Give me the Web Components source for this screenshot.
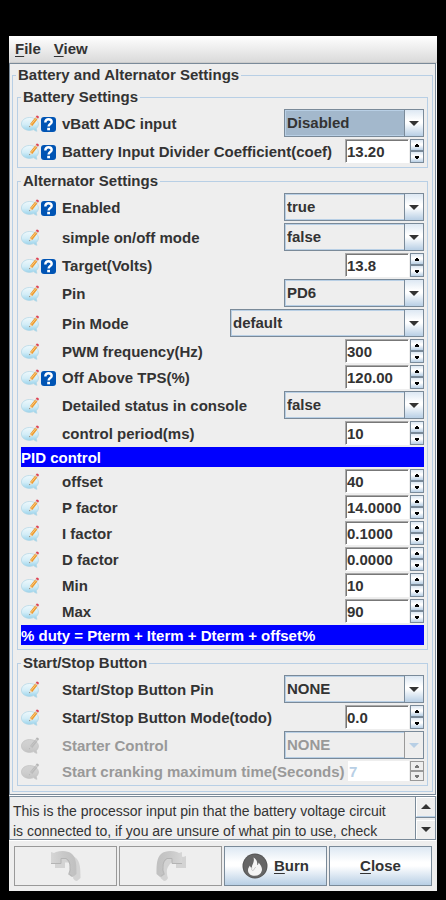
<!DOCTYPE html>
<html lang="en">
<head>
<meta charset="utf-8">
<meta name="viewport" content="width=device-width, initial-scale=1">
<title>Battery and Alternator Settings</title>
<style>
  body {
    margin: 0;
    padding: 36px 9px 9px;
    background: #000;
    color: #333;
    font: bold 15px/20px "Liberation Sans", Arial, sans-serif;
    --face: #eee;
    --edge: #7a8a99;
    --soft: #b8cfe5;
    --off: #999;
    --metal: linear-gradient(#dde8f3, #fff 40%, #fff 50%, #b8cfe5);
  }
</style>
</head>
<body>
<settings-window>
  <menu-bar slot="menu"></menu-bar>
  <settings-group heading="Battery and Alternator Settings" outer>
    <settings-group heading="Battery Settings">
      <setting-row label="vBatt ADC input" kind="choice" value="Disabled" help current></setting-row>
      <setting-row label="Battery Input Divider Coefficient(coef)" value="13.20" help></setting-row>
    </settings-group>
    <settings-group heading="Alternator Settings">
      <setting-row label="Enabled" kind="choice" value="true" options="false" help></setting-row>
      <setting-row label="simple on/off mode" kind="choice" value="false" options="true"></setting-row>
      <setting-row label="Target(Volts)" value="13.8" help></setting-row>
      <setting-row label="Pin" kind="choice" value="PD6"></setting-row>
      <setting-row label="Pin Mode" kind="choice" value="default" wide></setting-row>
      <setting-row label="PWM frequency(Hz)" value="300"></setting-row>
      <setting-row label="Off Above TPS(%)" value="120.00" help></setting-row>
      <setting-row label="Detailed status in console" kind="choice" value="false" options="true"></setting-row>
      <setting-row label="control period(ms)" value="10"></setting-row>
      <banner-row>PID control</banner-row>
      <setting-row label="offset" value="40"></setting-row>
      <setting-row label="P factor" value="14.0000"></setting-row>
      <setting-row label="I factor" value="0.1000"></setting-row>
      <setting-row label="D factor" value="0.0000"></setting-row>
      <setting-row label="Min" value="10"></setting-row>
      <setting-row label="Max" value="90"></setting-row>
      <banner-row>% duty = Pterm + Iterm + Dterm + offset%</banner-row>
    </settings-group>
    <settings-group heading="Start/Stop Button">
      <setting-row label="Start/Stop Button Pin" kind="choice" value="NONE"></setting-row>
      <setting-row label="Start/Stop Button Mode(todo)" value="0.0"></setting-row>
      <setting-row label="Starter Control" kind="choice" value="NONE" disabled></setting-row>
      <setting-row label="Start cranking maximum time(Seconds)" value="7" disabled></setting-row>
    </settings-group>
  </settings-group>
  <hint-pane slot="hint">This is the processor input pin that the battery voltage circuit is connected to, if you are unsure of what pin to use, check</hint-pane>
  <action-bar slot="actions"></action-bar>
</settings-window>

<script>
const define = (name, css, html, setup) => customElements.define(name, class extends HTMLElement {
  connectedCallback() {
    if (this.shadowRoot) return;
    const root = this.attachShadow({ mode: 'open' });
    root.innerHTML = `<style>*{box-sizing:border-box}:host{display:block;box-sizing:border-box}${css}</style>` +
      (typeof html === 'function' ? html(this) : html);
    if (setup) setup(root, this);
  }
});

define('settings-window', `
  :host { background: var(--face); }
  main { margin-right: 1px; border: 1px solid var(--edge); padding: 0 2px 2px; box-shadow: 1px 1px #fff; }
  .hint { margin-top: 1px; }
`, `<slot name="menu"></slot><main><slot></slot></main><div class="hint"><slot name="hint"></slot></div><slot name="actions"></slot>`);

define('menu-bar', `
  :host { background: linear-gradient(#fff, #dadada); border-bottom: 1px solid #ccc; }
  nav { display: flex; gap: 13px; padding: 3px 6px; }
  button { border: 0; padding: 0; background: none; font: inherit; color: inherit; }
  u { text-underline-offset: 2px; }
`, `<nav aria-label="Main menu"><button type="button"><u>F</u>ile</button><button type="button"><u>V</u>iew</button></nav>`);

define('settings-group', `
  :host(:not(:first-of-type)) { margin-top: 2px; }
  fieldset { margin: 0; min-width: 0; border: 1px solid var(--soft); padding: 0 3px 3px; }
  legend { margin: 0; padding: 1px 2px; height: 22px; line-height: 20px; }
  :host([outer]) fieldset { padding: 0 4px 5px; }
  :host([outer]) legend { margin-left: -1px; }
`, el => `<fieldset><legend>${el.getAttribute('heading')}</legend><slot></slot></fieldset>`);

define('banner-row', `
  :host { margin: 1px 0; background: #00f; color: #fff; height: 20px; line-height: 21px; }
`, `<slot></slot>`);

const bubble = off => {
  const c = off
    ? { a: '#d2d2d2', m: '#cecece', b: '#c2c2c2', p: '#bababa', q: '#c6c6c6', t: '#b4b4b4', w: '#ccc', s: '#c2c2c2' }
    : { a: '#eef8fc', m: '#d3edf7', b: '#93d0ea', p: '#ee9a2e', q: '#fbd08a', t: '#dd4455', w: '#d8c8b8', s: '#afd5e5' };
  return `<svg class="note" width="18" height="17" viewBox="0 0 18 17" aria-hidden="true">
    <defs><linearGradient id="g" x2="0" y2="1"><stop stop-color="${c.a}"/><stop offset=".5" stop-color="${c.m}"/><stop offset="1" stop-color="${c.b}"/></linearGradient></defs>
    <path d="M8.6 2.500C4 2.500.4 5.300.4 9s3.600 6.400 8.200 6.400c1.500 0 3-.3 4.200-.8.8.9 2 1.600 3.200 1.700-.5-.8-.7-1.800-.6-2.900 1.300-1.100 2-2.700 2-4.400 0-3.700-4-6.500-8.800-6.500Z" fill="url(#g)" stroke="${c.s}" stroke-width=".7"/>
    <path d="M8.200 12.200 9 8.900 11.300 11Z" fill="${off ? c.w : '#f3dfc2'}"/><path d="M8.200 12.200 8.500 10.900 9.400 11.700Z" fill="${off ? '#aaa' : '#555'}"/>
    <path d="M9 8.900 14 2.700 16.300 4.600 11.300 11Z" fill="${c.p}"/><path d="M9.900 9.700 15 3.500" stroke="${c.q}" stroke-width=".9"/>
    <path d="m14 2.700.8-1 2.300 1.900-.8 1Z" fill="${c.w}"/><path d="m14.800 1.700.8-1c.7-.6 2.700.8 2.200 1.900l-.7 1Z" fill="${c.t}"/></svg>`;
};
const help = `<svg width="15" height="15" viewBox="0 0 15 15" role="img" aria-label="Help"><rect width="15" height="15" rx="3" fill="#0054b4"/>
  <path d="M4.300 5.400C4.300 3 5.700 2.200 7.500 2.200s3.200 1 3.200 2.700c0 2.200-3.100 2.200-3.100 4.700" fill="none" stroke="#fff" stroke-width="2.400"/><rect x="6.200" y="10.800" width="2.800" height="2.500" fill="#fff"/></svg>`;

define('setting-row', `
  .row { display: grid; grid-template-columns: 41px 1fr auto; align-items: center; height: 26px; }
  .choice { height: 30px; }
  .icons { display: flex; gap: 2px; align-items: flex-end; }
  svg { display: block; }
  .icons button { border: 0; padding: 0; background: none; }
  label { white-space: nowrap; padding-top: 1px; }
  select, input { font: inherit; color: inherit; border-radius: 0; margin: 0; }
  .combo { display: grid; grid-template-columns: 1fr 19px; width: 140px; height: 28px; border: 1px solid var(--edge); }
  :host([wide]) .combo { width: 194px; }
  select { appearance: none; grid-area: 1 / 1 / 2 / 3; width: 100%; height: 26px; padding: 0 21px 1px 1px; border: 1px solid var(--soft); background: var(--face); outline: 0; }
  :host([current]) select { background: #a3b8cc; }
  .drop { grid-area: 1 / 2; display: grid; place-items: center; border-left: 1px solid var(--edge); background: var(--metal); pointer-events: none; z-index: 1; }
  .spin { display: grid; grid-template-columns: 64px 14px; gap: 1px; height: 24px; }
  input { width: 64px; height: 24px; border: 1px solid #aaa; border-right-color: #fff; border-bottom-color: #fff; box-shadow: inset 1px 1px #777; padding: 1px 0 0 1px; background: #fff; outline: 0; }
  .arrows { display: grid; grid-template-rows: 1fr 1fr; }
  .arrows button { display: grid; place-items: center; min-height: 0; margin: 0; padding: 0; border: 1px solid var(--edge); background: var(--metal); color: #000; }
  :host([disabled]) { color: var(--off); }
  :host([disabled]) .row:not(.choice) { height: 22px; }
  :host([disabled]) select, :host([disabled]) input { opacity: 1; }
  :host([disabled]) .drop { background: var(--face); color: var(--soft); border-color: var(--off); }
  :host([disabled]) .spin { grid-template-columns: 61px 14px; height: 20px; }
  :host([disabled]) input { width: 61px; height: 20px; border: 0; box-shadow: none; color: var(--soft); }
  :host([disabled]) .arrows button { background: var(--face); border-color: var(--off); color: #777; }
`, el => {
  const v = el.getAttribute('value'), off = el.hasAttribute('disabled'), d = off ? 'disabled' : '';
  const choice = el.getAttribute('kind') === 'choice';
  const opts = [v, ...(el.getAttribute('options') || '').split(',').filter(Boolean)];
  const tri = p => `<svg width="4" height="3" viewBox="0 0 4 3" shape-rendering="crispEdges" aria-hidden="true"><path d="${p}" fill="currentColor"/></svg>`;
  const control = choice
    ? `<div class="combo"><select id="f" ${d}>${opts.map(o => `<option>${o}</option>`).join('')}</select>
       <span class="drop"><svg width="10" height="5" viewBox="0 0 10 5" aria-hidden="true"><path d="M0 0H10L5 5Z" fill="currentColor"/></svg></span></div>`
    : `<div class="spin"><input id="f" inputmode="decimal" value="${v}" ${d}><div class="arrows">
       <button type="button" aria-label="Increase" ${d}>${tri('M1 0H3V1H4V3H0V1H1Z')}</button><button type="button" aria-label="Decrease" ${d}>${tri('M0 0H4V2H3V3H1V2H0Z')}</button></div></div>`;
  return `<div class="row ${choice ? 'choice' : ''}"><span class="icons">${bubble(off)}${el.hasAttribute('help') ? `<button type="button">${help}</button>` : ''}</span>
    <label for="f">${el.getAttribute('label')}</label>${control}</div>`;
}, root => {
  const field = root.querySelector('input');
  root.querySelectorAll('.arrows button').forEach((b, i) => b.addEventListener('click', () => {
    const places = (field.value.split('.')[1] || '').length;
    field.value = (Number(field.value) + (i ? -1 : 1) / 10 ** places).toFixed(places);
  }));
});

define('hint-pane', `
  .pane { display: grid; grid-template-columns: 1fr 20px; height: 44px; margin-right: 1px; border: 1px solid var(--edge); box-shadow: 0 1px #fff; overflow: hidden; }
  p { margin: 0; padding: 4px 18px 0 3px; height: 42px; overflow: hidden; font-size: 14px; font-weight: normal; }
  .bar { display: grid; grid-template-rows: 1fr 1fr; gap: 3px; border-left: 1px solid var(--edge); }
  button { display: grid; place-items: center; min-height: 0; padding: 0; border: 1px solid #fff; border-width: 1px 0 0 1px; background: var(--face); color: #333; box-shadow: 0 1px var(--edge); }
  button:first-child { border-bottom: 1px solid var(--soft); }
`, `<div class="pane"><p><slot></slot></p><div class="bar">
  <button type="button" aria-label="Scroll up"><svg width="10" height="5" viewBox="0 0 10 5"><path d="M0 5H10L5 0Z" fill="currentColor"/></svg></button>
  <button type="button" aria-label="Scroll down"><svg width="10" height="5" viewBox="0 0 10 5"><path d="M0 0H10L5 5Z" fill="currentColor"/></svg></button></div></div>`);

const bend = 'M0 1 3 2 5 1C10-.5 17-.5 21 3c4 4 4.500 9 4.500 20L22 26c-2 0-3-1-4-3 1.500-4 1.500-9 0-11-1-2-2-3-3.500-4.500H10V13H0Z';
const arrow = flip => `<svg width="30" height="30" viewBox="0 0 30 30" aria-hidden="true">
  <defs><linearGradient id="m"><stop stop-color="#d6d6d6"/><stop offset=".5" stop-color="#c8c8c8"/><stop offset="1" stop-color="#c0c0c0"/></linearGradient></defs>
  <g transform="${flip ? 'translate(30 4) scale(-1 1)' : 'translate(4 4)'}"><path d="${bend}" fill="#d3d3d3"/></g>
  <g transform="${flip ? 'translate(26 0) scale(-1 1)' : ''}"><path d="${bend}" fill="url(#m)"/>
  <path d="M0 12.500H10V7.500H15C18 9 19 12 19 16" fill="none" stroke="#b4b4b4"/><path d="M19 16c1 3 0 5-1 7l3 2" fill="none" stroke="#bababa" stroke-width="1.500"/></g></svg>`;
define('action-bar', `
  :host { padding: 6px 5px 5px; }
  div { display: grid; grid-template-columns: repeat(4, 1fr); gap: 2px; }
  button { display: flex; align-items: center; justify-content: center; gap: 6px; min-width: 0; height: 40px; margin: 0; padding: 0; border: 1px solid var(--edge); background: var(--metal); font: inherit; color: inherit; }
  button:disabled { border-color: var(--off); background: var(--face); }
  u { text-underline-offset: 2px; }
`, `<div>
  <button type="button" disabled aria-label="Undo">${arrow(false)}</button>
  <button type="button" disabled aria-label="Redo">${arrow(true)}</button>
  <button type="button"><svg width="26" height="26" viewBox="0 0 26 26" aria-hidden="true"><circle cx="13" cy="13" r="12.500" fill="#555"/><circle cx="13" cy="13" r="11.500" fill="#666"/>
    <path d="M11.500 4.500c3 2 4.300 4.500 3.500 7.500 1.200-.2 1.600-1.300 1.500-2.500 2.600 2.800 4 5.500 3.300 8.300-.8 3.200-3.500 5-7 5-3.800 0-6.700-2-6.800-5.300-.1-2.200 1-3.500 2-5 .2 1.500.8 2.200 1.800 2.200C9.800 11 13 9.500 11.500 4.500Z" fill="#f4f4f4"/><path d="M10 14.500c-1 2 0 3 .8 3 1.300 0 1.200-2 3-3.500" fill="none" stroke="#bbb" stroke-width=".8"/></svg><span><u>B</u>urn</span></button>
  <button type="button"><span><u>C</u>lose</span></button></div>`);
</script>
</body>
</html>
